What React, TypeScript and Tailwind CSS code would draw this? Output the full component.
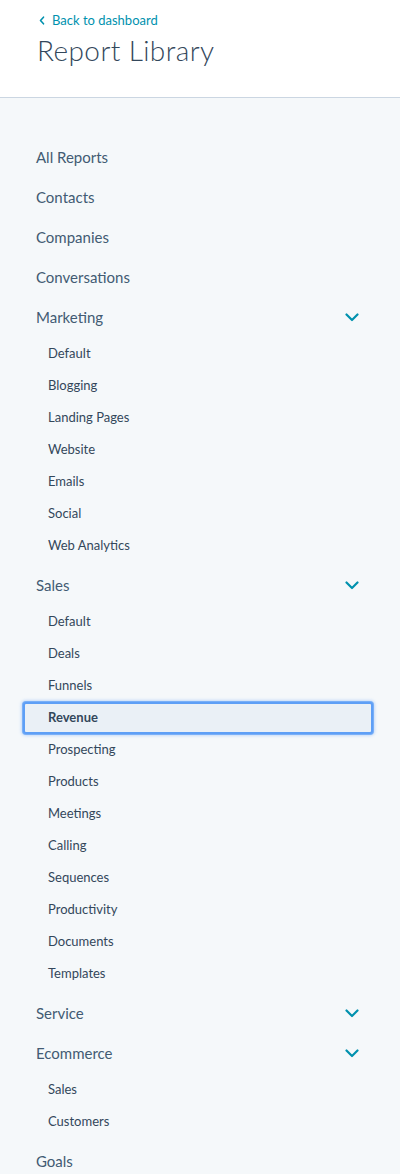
import React from "react";

const font = { fontFamily: "Lato, 'Noto Sans', sans-serif" };

type Section = { label: string; children?: string[]; expandable?: boolean };

const sections: Section[] = [
  { label: "All Reports" },
  { label: "Contacts" },
  { label: "Companies" },
  { label: "Conversations" },
  {
    label: "Marketing",
    expandable: true,
    children: ["Default", "Blogging", "Landing Pages", "Website", "Emails", "Social", "Web Analytics"],
  },
  {
    label: "Sales",
    expandable: true,
    children: [
      "Default",
      "Deals",
      "Funnels",
      "Revenue",
      "Prospecting",
      "Products",
      "Meetings",
      "Calling",
      "Sequences",
      "Productivity",
      "Documents",
      "Templates",
    ],
  },
  { label: "Service", expandable: true },
  { label: "Ecommerce", expandable: true, children: ["Sales", "Customers"] },
  { label: "Goals" },
];

function Chevron() {
  return (
    <svg width="14" height="9" viewBox="0 0 14 9" fill="none">
      <path d="M1.5 1.5 L7 7 L12.5 1.5" stroke="#0091ae" strokeWidth="2.2" strokeLinecap="round" strokeLinejoin="round" />
    </svg>
  );
}

export default function App() {
  return (
    <div className="w-[400px] min-h-[1174px] bg-[#f5f8fa] text-[#33475b]" style={font}>
      <header className="bg-white border-b border-[#cbd6e2] h-[98px] pl-[37px] pt-[12px]">
        <a className="flex items-center gap-[7px] text-[13px] leading-[16px] text-[#0091ae]">
          <svg width="6" height="9" viewBox="0 0 6 9" fill="none" className="ml-[2px]">
            <path d="M4.5 1.2 L1.5 4.5 L4.5 7.8" stroke="#0091ae" strokeWidth="1.6" strokeLinecap="round" strokeLinejoin="round" />
          </svg>
          <span>Back to dashboard</span>
        </a>
        <h1 className="mt-[4px] text-[28px] leading-[36px] font-light text-[#33475b] tracking-[0.4px]">Report Library</h1>
      </header>
      <nav className="pt-[39px] pb-[8px]">
        {sections.map((s, i) => (
          <div key={i}>
            <div className="h-10 flex items-center justify-between pl-9 pr-[41px] text-[15px] text-[#425b73]">
              <span>{s.label}</span>
              {s.expandable && <Chevron />}
            </div>
            {s.children && (
              <div className="pt-px pb-[3px]">
                {s.children.map((c, j) => {
                  const active = s.label === "Sales" && c === "Revenue";
                  return (
                    <div
                      key={j}
                      className={
                        active
                          ? "h-8 flex items-center ml-[23px] mr-[27px] pl-[23px] text-[13px] font-bold text-[#33475b] bg-[#eaf0f6] border-2 border-[#5e9ff6] rounded-[3px] shadow-[0_0_0_1px_rgba(94,159,246,0.75),0_0_3px_2px_rgba(110,165,245,0.35)]"
                          : "h-8 flex items-center ml-[23px] mr-[27px] pl-[25px] text-[13px] text-[#33475b]"
                      }
                    >
                      {c}
                    </div>
                  );
                })}
              </div>
            )}
          </div>
        ))}
      </nav>
    </div>
  );
}
